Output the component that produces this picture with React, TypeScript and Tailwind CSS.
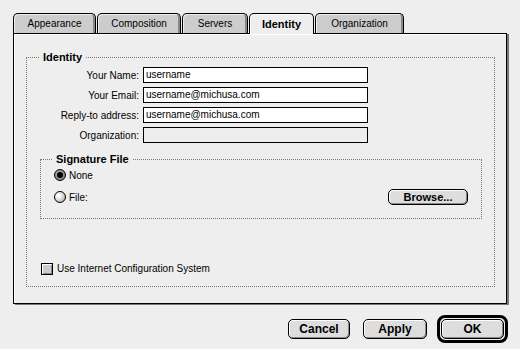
import React from 'react';

const tabs = [
  { label: 'Appearance', w: 'w-[83px]' },
  { label: 'Composition', w: 'w-[84px]' },
  { label: 'Servers', w: 'w-[66px]' },
  { label: 'Identity', w: 'w-[65px]', active: true },
  { label: 'Organization', w: 'w-[89px]' },
];

const fields = [
  { label: 'Your Name:', value: 'username' },
  { label: 'Your Email:', value: 'username@michusa.com' },
  { label: 'Reply-to address:', value: 'username@michusa.com' },
  { label: 'Organization:', value: '', disabled: true },
];

const Radio: React.FC<{ checked?: boolean }> = ({ checked }) =>
  checked ? (
    <span className="flex items-center justify-center w-[12px] h-[12px] rounded-full border border-black bg-[radial-gradient(circle_at_40%_40%,#bbb,#666)]">
      <span className="w-[6px] h-[6px] rounded-full bg-black" />
    </span>
  ) : (
    <span className="block w-[12px] h-[12px] rounded-full border border-black bg-[radial-gradient(circle_at_35%_35%,#fff_10%,#ddd_45%,#999)]" />
  );

const Button: React.FC<{ label: string; className: string }> = ({ label, className }) => (
  <div
    className={`flex items-center justify-center rounded-[5px] border border-black bg-[#dddddd] font-bold text-black shadow-[inset_1px_1px_0_#fff,inset_-1px_-1px_0_#888] ${className}`}
  >
    {label}
  </div>
);

export default function App() {
  return (
    <div className="w-[520px] h-[349px] bg-[#eeeeee] pt-[13px] pl-[13px] text-[10px] text-black font-['Liberation_Sans',Arial,sans-serif]">
      {/* Tabs */}
      <div className="flex items-start h-[20px] gap-px">
        {tabs.map((t) =>
          t.active ? (
            <div
              key={t.label}
              className={`relative z-10 flex items-center justify-center h-[21px] ${t.w} border border-b-0 border-black rounded-t-[5px] bg-[#eeeeee] shadow-[inset_1px_1px_0_#fff] text-[11px] font-bold`}
            >
              {t.label}
            </div>
          ) : (
            <div
              key={t.label}
              className={`flex items-center justify-center h-[20px] ${t.w} border border-b-0 border-black rounded-t-[5px] bg-[#cccccc] shadow-[inset_1px_1px_0_#eee,inset_-2px_0_0_#888]`}
            >
              {t.label}
            </div>
          )
        )}
      </div>

      {/* Panel */}
      <div className="w-[494px] h-[271px] border border-black bg-[#eeeeee] shadow-[inset_1px_1px_0_#fff,2px_1px_0_#777] pl-[12px] pt-[17px]">
        <fieldset className="w-[469px] h-[236px] border border-dotted border-[#777]">
          <legend className="ml-[12px] px-[4px] text-[11px] leading-[12px] font-bold">Identity</legend>

          <div className="mt-[4px] flex flex-col gap-[4px]">
            {fields.map((f) => (
              <div key={f.label} className="flex items-center h-[16px]">
                <span className="w-[112px] text-right">{f.label}</span>
                <div
                  className={`ml-[4px] w-[225px] h-[16px] border border-black px-[2px] leading-[14px] ${
                    f.disabled ? 'bg-[#eeeeee]' : 'bg-white'
                  }`}
                >
                  {f.value}
                </div>
              </div>
            ))}
          </div>

          <fieldset className="ml-[13px] mt-[10px] w-[442px] h-[66px] border border-dotted border-[#777] pl-[13px] pr-[13px]">
            <legend className="ml-[-2px] px-[4px] text-[11px] leading-[12px] font-bold">Signature File</legend>
            <div className="mt-[3px] flex items-center h-[14px] gap-[3px]">
              <Radio checked />
              <span>None</span>
            </div>
            <div className="mt-[7px] flex items-center justify-between h-[16px]">
              <div className="flex items-center gap-[3px]">
                <Radio />
                <span>File:</span>
              </div>
              <Button label="Browse..." className="w-[80px] h-[16px] rounded-[4px] text-[11px]" />
            </div>
          </fieldset>

          <div className="mt-[42px] ml-[14px] flex items-center gap-[4px]">
            <span className="block w-[12px] h-[12px] border border-black bg-[#cccccc] shadow-[inset_1px_1px_0_#fff,inset_-1px_-1px_0_#888]" />
            <span>Use Internet Configuration System</span>
          </div>
        </fieldset>
      </div>

      {/* Dialog buttons */}
      <div className="mt-[11px] pr-[12px] flex items-center justify-end">
        <Button label="Cancel" className="w-[62px] h-[20px] text-[12px]" />
        <Button label="Apply" className="ml-[13px] w-[64px] h-[20px] text-[12px]" />
        <div className="ml-[10px] p-px rounded-[8px] border-[3px] border-black">
          <Button label="OK" className="w-[63px] h-[20px] text-[12px]" />
        </div>
      </div>
    </div>
  );
}
